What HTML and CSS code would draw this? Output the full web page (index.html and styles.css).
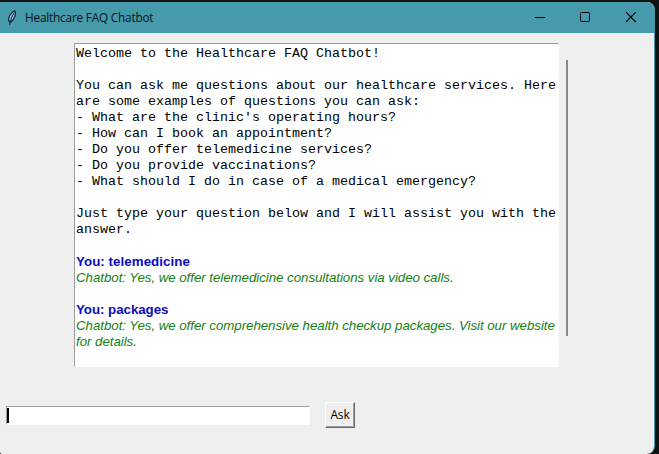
FILE: index.html
```html
<!DOCTYPE html>
<html lang="en">
<head>
<meta charset="utf-8">
<title>Healthcare FAQ Chatbot</title>
<link rel="stylesheet" href="styles.css">
</head>
<body>
<div class="window">
  <header class="titlebar">
    <svg class="feather" width="12" height="18" viewBox="0 0 12 18">
      <path d="M3 12.5C1.8 9 3.8 4 8.8 1.8 10.2 4 9 10 5 12.8z" fill="#8fc3f2" stroke="#10202c" stroke-width="1.2"/>
      <path d="M8 4C6 7 4.5 11 3.6 16" fill="none" stroke="#0c1b2c" stroke-width="1"/>
    </svg>
    <span class="title">Healthcare FAQ Chatbot</span>
    <div class="controls">
      <svg width="46" height="31" viewBox="0 0 46 31"><path d="M18 15.5h10" stroke="#000"/></svg>
      <svg width="46" height="31" viewBox="0 0 46 31"><rect x="17.5" y="10.5" width="9" height="9" rx="1" fill="none" stroke="#000"/></svg>
      <svg width="46" height="31" viewBox="0 0 46 31"><path d="M17 10.2l9.8 9.8M26.8 10.2L17 20" stroke="#000" stroke-width="1.1"/></svg>
    </div>
  </header>
  <main class="content">
    <div class="chat">
      <div class="log">
        <div class="intro">Welcome to the Healthcare FAQ Chatbot!

You can ask me questions about our healthcare services. Here
are some examples of questions you can ask:
- What are the clinic's operating hours?
- How can I book an appointment?
- Do you offer telemedicine services?
- Do you provide vaccinations?
- What should I do in case of a medical emergency?

Just type your question below and I will assist you with the
answer.</div>
        <div class="user">You: telemedicine</div>
        <div class="bot">Chatbot: Yes, we offer telemedicine consultations via video calls.</div>
        <div class="user next">You: packages</div>
        <div class="bot">Chatbot: Yes, we offer comprehensive health checkup packages. Visit our website
for details.</div>
      </div>
      <div class="scrollbar"></div>
    </div>
    <div class="ask-row">
      <div class="entry"><span class="caret"></span></div>
      <button class="ask">Ask</button>
    </div>
  </main>
</div>
</body>
</html>
```
FILE: styles.css
```css
* { box-sizing: border-box; }
body {
  margin: 0;
  height: 454px;
  padding-top: 2px;
  background: #111213;
  overflow: hidden;
}
.window {
  width: 655px;
  height: 452px;
  background: #efefef;
  border-right: 1px solid #4599aa;
  border-radius: 2px 8px 8px 2px;
  overflow: hidden;
}
.titlebar {
  display: flex;
  align-items: center;
  height: 31px;
  padding-left: 6px;
  background: #459aac;
}
.feather { margin-right: 7px; }
.title {
  flex: 1;
  padding-bottom: 2px;
  font: 11.8px/16px "Open Sans", sans-serif;
  letter-spacing: -0.2px;
  color: #061418;
}
.controls { display: flex; margin-right: -1px; }
.content { padding-top: 10px; }
.chat { display: flex; height: 324px; margin-left: 74px; }
.log {
  width: 485px;
  padding: 2px 0 0 1px;
  background: #fff;
  border: 1px solid #fff;
  border-top-color: #9c9c9c;
  border-left-color: #9c9c9c;
}
.intro, .user, .bot { white-space: pre; }
.intro {
  height: 208px;
  font: 13.333px/16px "Liberation Mono", monospace;
  color: #000;
}
.user, .bot { font: 13.333px/16px "Liberation Sans", sans-serif; }
.user { font-weight: bold; letter-spacing: 0.05px; color: #0b0bc0; }
.next { margin-top: 16px; letter-spacing: -0.05px; }
.bot { font-style: italic; letter-spacing: -0.057px; color: #138013; }
.scrollbar {
  width: 2px;
  height: 276px;
  margin: 17px 0 0 7px;
  background: #878787;
}
.ask-row { display: flex; align-items: center; margin: 35px 0 0 6px; }
.entry {
  width: 304px;
  height: 19px;
  padding: 1px 0 0;
  background: #fff;
  border: 1px solid #fff;
  border-top-color: #9c9c9c;
  border-left-color: #9c9c9c;
}
.caret { display: block; width: 2px; height: 15px; background: #000; }
.ask {
  width: 30px;
  height: 26px;
  margin-left: 15px;
  padding: 0;
  background: #efefef;
  border: 1px solid #fff;
  border-right: 1px solid #696969;
  border-bottom: 1px solid #696969;
  box-shadow: inset -1px -1px #a0a0a0;
  font: 12px/16px "Open Sans", sans-serif;
  letter-spacing: -0.2px;
  color: #000;
}
```
